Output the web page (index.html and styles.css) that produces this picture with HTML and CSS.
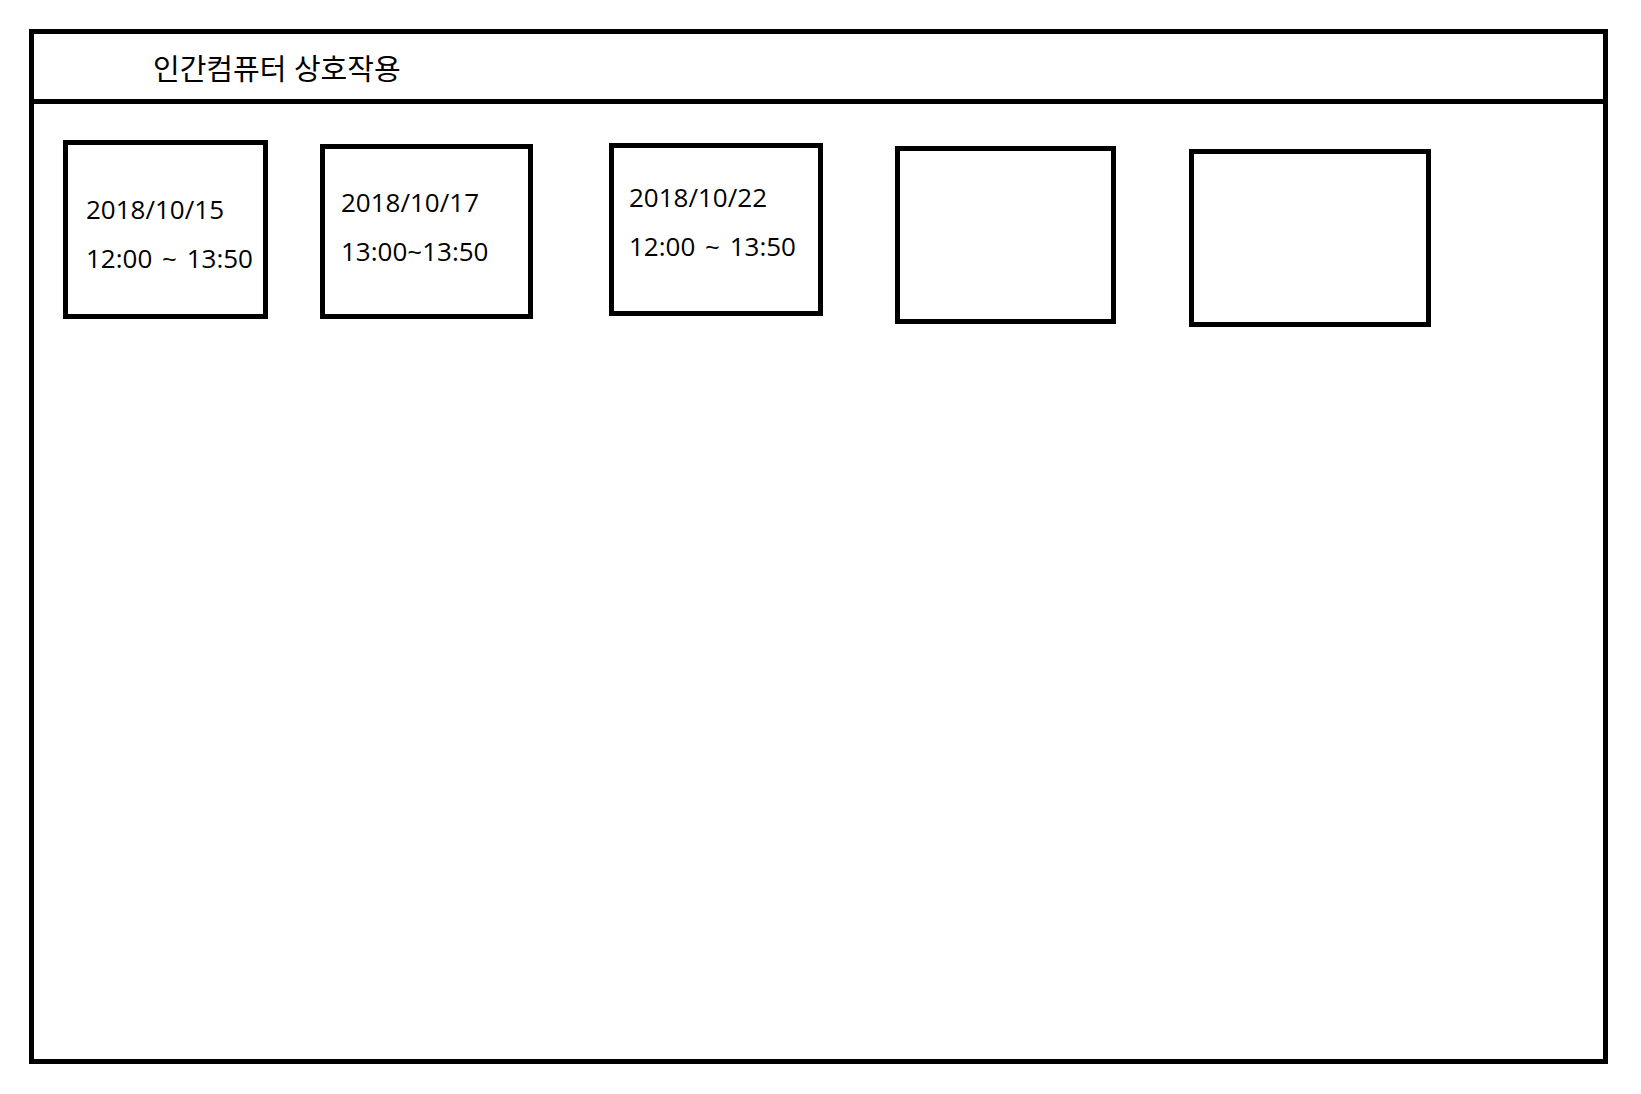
FILE: index.html
```html
<!DOCTYPE html>
<html lang="ko">
<head>
    <meta charset="UTF-8">
    <meta name="viewport" content="width=device-width, initial-scale=1.0">
    <title>인간컴퓨터 상호작용</title>

    <link rel="stylesheet" href="styles.css">
</head>
<body>

    <div class="frame">
        <div class="header">
            <h1>인간컴퓨터 상호작용</h1>
        </div>

        <div class="board">
            <div class="card card-a">
                <div class="line">2018/10/15</div>
                <div class="line">12:00 ~ 13:50</div>
            </div>

            <div class="card card-b">
                <div class="line">2018/10/17</div>
                <div class="line">13:00~13:50</div>
            </div>

            <div class="card card-c">
                <div class="line">2018/10/22</div>
                <div class="line">12:00 ~ 13:50</div>
            </div>

            <div class="card card-d"></div>

            <div class="card card-e"></div>
        </div>
    </div>

</body>
</html>
```

FILE: styles.css
```css
body {
    margin: 0;
    background-color: #fff;
    color: #000;
    font-family: "Open Sans", "Noto Sans CJK KR", sans-serif;
}

.frame {
    box-sizing: border-box;
    width: 1579px;
    height: 1035px;
    margin: 29px;
    border: 5px solid #000;
}

.header {
    height: 65px;
    border-bottom: 5px solid #000;
    padding-left: 119px;
}

.header h1 {
    margin: 0;
    font-size: 29px;
    font-weight: normal;
    line-height: 70px;
}

.board {
    display: flex;
    align-items: flex-start;
    padding-left: 29px;
}

.card {
    box-sizing: border-box;
    border: 5px solid #000;
    font-size: 26px;
    word-spacing: 3px;
}

.card .line {
    line-height: 49px;
    white-space: nowrap;
}

.card-a {
    width: 205px;
    height: 179px;
    margin-top: 36px;
    padding: 40px 0 0 18px;
}

.card-b {
    width: 213px;
    height: 175px;
    margin: 40px 0 0 52px;
    padding: 29px 0 0 16px;
}

.card-c {
    width: 214px;
    height: 173px;
    margin: 39px 0 0 76px;
    padding: 25px 0 0 15px;
}

.card-d {
    width: 221px;
    height: 178px;
    margin: 42px 0 0 72px;
}

.card-e {
    width: 242px;
    height: 178px;
    margin: 45px 0 0 73px;
}
```
